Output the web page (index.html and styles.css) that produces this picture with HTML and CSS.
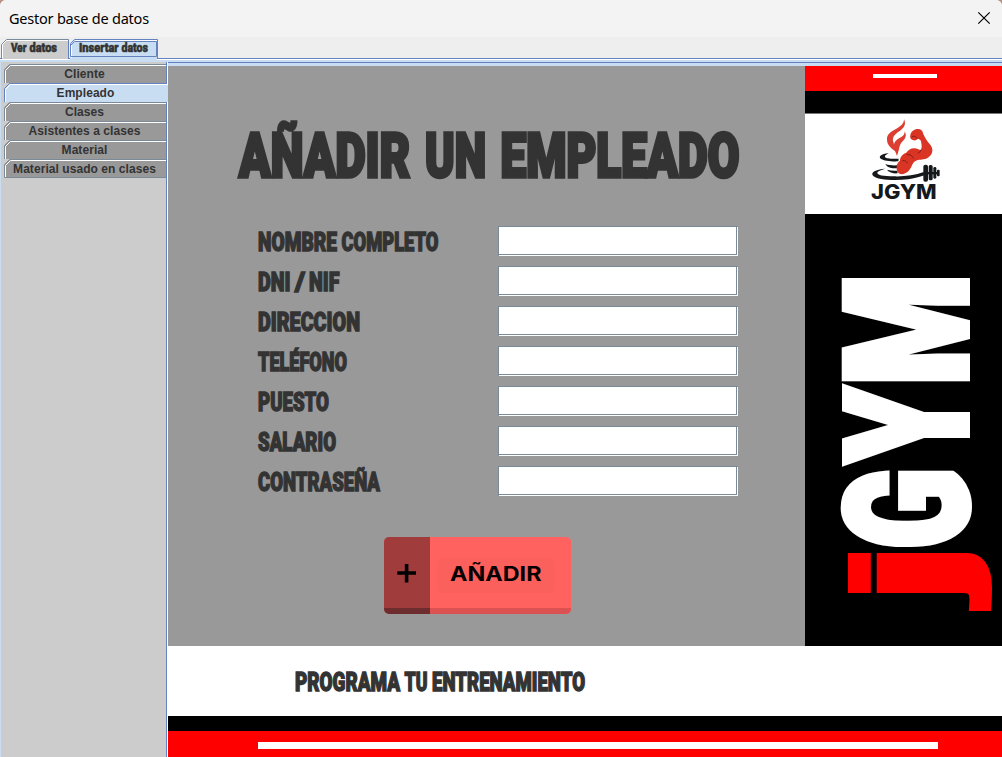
FILE: index.html
```
<!DOCTYPE html>
<html lang="es">
<head>
<meta charset="utf-8">
<title>Gestor base de datos</title>
<link rel="stylesheet" href="styles.css">
</head>
<body>
<div class="window">
  <header class="titlebar">
    <span class="caption">Gestor base de datos</span>
    <svg class="close" width="14" height="14" viewBox="0 0 14 14"><path d="M1.3 1.3 12.7 12.7M12.7 1.3 1.3 12.7"/></svg>
  </header>
  <nav class="tabs">
    <svg width="160" height="21" viewBox="0 0 160 21">
      <path class="tab-fill" d="M2 20V5L6 1H68V20Z"/>
      <path class="line-light" d="M2.5 19V5.500L6.500 1.500H68"/>
      <path class="line-grey" d="M1.500 19V5.500L6.500.5H68.500"/>
      <path class="line-blue" d="M68.500.5V19"/>
      <path class="tab-selected" d="M70 21V5L74 1H157V21Z"/>
      <path class="line-light" d="M71.500 19V5.500L75.500 1.500H157"/>
      <path class="line-blue" d="M70.500 17.500V4.500L74.500.5H157.500V20M74.500 2.500H156.500V17.500H70.500M70.500 6.500 74.500 2.500"/>
      <g class="impact small"><text x="11" y="13.300" textLength="15.500" lengthAdjust="spacingAndGlyphs">Ver</text><text x="29.500" y="13.300" textLength="27.500" lengthAdjust="spacingAndGlyphs">datos</text><text x="79" y="13.300" textLength="39.500" lengthAdjust="spacingAndGlyphs">Insertar</text><text x="121.500" y="13.300" textLength="26.500" lengthAdjust="spacingAndGlyphs">datos</text></g>
    </svg>
  </nav>
  <div class="body">
    <aside class="sidebar">
      <div class="side-tab"><svg width="164" height="19"><path class="side-fill" d="M1 20V5L5 1H164V20Z"/><path class="line-light" d="M1.500 20V6.500L6.500 1.500H164"/><path class="line-grey" d="M.5 20V5.500L5.500.5H164"/></svg><span>Cliente</span></div>
      <div class="side-tab active"><svg width="164" height="19"><path class="side-fill" d="M1 20V5L5 1H164V20Z"/><path class="line-light" d="M1.500 20V6.500L6.500 1.500H164"/><path class="line-blue" d="M.5 20V5.500L5.500.5H163"/></svg><span>Empleado</span></div>
      <div class="side-tab"><svg width="164" height="19"><path class="side-fill" d="M1 20V5L5 1H164V20Z"/><path class="line-light" d="M1.500 20V6.500L6.500 1.500H164"/><path class="line-grey" d="M.5 20V5.500L5.500.5H164"/></svg><span>Clases</span></div>
      <div class="side-tab"><svg width="164" height="19"><path class="side-fill" d="M1 20V5L5 1H164V20Z"/><path class="line-light" d="M1.500 20V6.500L6.500 1.500H164"/><path class="line-grey" d="M.5 20V5.500L5.500.5H164"/></svg><span>Asistentes a clases</span></div>
      <div class="side-tab"><svg width="164" height="19"><path class="side-fill" d="M1 20V5L5 1H164V20Z"/><path class="line-light" d="M1.500 20V6.500L6.500 1.500H164"/><path class="line-grey" d="M.5 20V5.500L5.500.5H164"/></svg><span>Material</span></div>
      <div class="side-tab last"><svg width="164" height="19"><path class="side-fill" d="M1 19V5L5 1H164V19Z"/><path class="line-light" d="M1.500 18V6.500L6.500 1.500H164"/><path class="line-grey" d="M164 18.500H.5V5.500L5.500.5H164"/></svg><span>Material usado en clases</span></div>
    </aside>
    <main class="content">
      <div class="upper">
        <section class="form">
          <svg class="title impact" width="510" height="70" viewBox="236 116 510 70">
            <text x="239" y="176.500" textLength="171" lengthAdjust="spacingAndGlyphs">AÑADIR</text>
            <text x="425" y="176.500" textLength="61" lengthAdjust="spacingAndGlyphs">UN</text>
            <text x="500.500" y="176.500" textLength="239" lengthAdjust="spacingAndGlyphs">EMPLEADO</text>
          </svg>
          <div class="fields">
            <label class="row"><svg class="impact label" width="240" height="30"><text x="0" y="25" textLength="79" lengthAdjust="spacingAndGlyphs">NOMBRE</text><text x="83.500" y="25" textLength="97" lengthAdjust="spacingAndGlyphs">COMPLETO</text></svg><input type="text"></label>
            <label class="row"><svg class="impact label" width="240" height="30"><text x="0" y="25" textLength="32.500" lengthAdjust="spacingAndGlyphs">DNI</text><text x="37" y="25" textLength="10" lengthAdjust="spacingAndGlyphs">/</text><text x="51" y="25" textLength="30.500" lengthAdjust="spacingAndGlyphs">NIF</text></svg><input type="text"></label>
            <label class="row"><svg class="impact label" width="240" height="30"><text x="0" y="25" textLength="102" lengthAdjust="spacingAndGlyphs">DIRECCION</text></svg><input type="text"></label>
            <label class="row"><svg class="impact label" width="240" height="30"><text x="0" y="25" textLength="89" lengthAdjust="spacingAndGlyphs">TELÉFONO</text></svg><input type="text"></label>
            <label class="row"><svg class="impact label" width="240" height="30"><text x="0" y="25" textLength="71" lengthAdjust="spacingAndGlyphs">PUESTO</text></svg><input type="text"></label>
            <label class="row"><svg class="impact label" width="240" height="30"><text x="0" y="25" textLength="78" lengthAdjust="spacingAndGlyphs">SALARIO</text></svg><input type="text"></label>
            <label class="row"><svg class="impact label" width="240" height="30"><text x="0" y="25" textLength="122" lengthAdjust="spacingAndGlyphs">CONTRASEÑA</text></svg><input type="password"></label>
          </div>
          <button class="add" type="button">
            <span class="plus"><svg width="46" height="77"><path d="M13.300 36H32M22.600 27V45.500"/></svg></span>
            <span class="add-face"><svg width="141" height="77"><rect class="inner" x="7" y="21" width="118" height="35" rx="6"/><text x="20" y="43.500" textLength="91.500" lengthAdjust="spacingAndGlyphs">AÑADIR</text></svg></span>
          </button>
        </section>
        <aside class="brand">
          <div class="brand-red"><i></i></div>
          <div class="brand-black"></div>
          <div class="brand-logo">
            <svg width="90" height="100" viewBox="0 27 270 300">
              <g class="ink">
                <path d="M86 145C62 147 55 155 62 161C72 167 93 170 115 169L116 161C95 162 78 161 75 156C73 152 79 149 86 145Z"/>
                <path d="M76 177C82 190 99 191 115 189L114 181C99 182 87 181 76 177Z"/>
                <path d="M81 194C88 203 100 206 113 205L112 197C100 198 91 197 81 194Z"/>
                <path d="M76 191C46 193 31 202 39 212C52 226 105 227 145 223C169 219 181 215 193 211L191 201C165 211 132 215 102 214C70 214 52 210 52 204C52 198 63 195 76 191Z"/>
                <rect x="190" y="179" width="14" height="51" rx="6"/><rect x="206" y="180" width="12" height="46" rx="5"/><rect x="220" y="186" width="9" height="35" rx="4"/><rect x="231" y="194" width="8" height="20" rx="3"/><rect x="193" y="201" width="43" height="7"/>
              </g>
              <path class="flame" d="M132 42C140 60 131 70 116 80C103 89 96 97 100 111C103 122 107 128 108 140C94 130 81 120 81 104C80 85 95 79 109 71C122 63 132 57 132 42Z"/>
              <path class="flame" d="M134 79C142 94 135 102 126 111C118 119 119 130 111 153C108 142 101 132 102 119C104 105 116 101 124 96C132 91 134 87 134 79Z"/>
              <g transform="translate(24 33)">
                <path class="arm" d="M127 58C128 47 139 39 150 39C159 39 164 44 165 52C170 64 177 76 188 88C195 98 195 109 188 118C180 128 170 131 158 131C146 131 137 136 132 148C127 162 116 174 101 175C90 174 85 165 86 151C87 143 91 138 96 134C96 123 105 113 114 111C121 102 128 97 138 97C146 96 151 101 157 102C162 99 162 90 159 76C157 70 153 69 148 69C144 75 135 74 130 70C126 67 126 62 127 58Z"/>
                <path class="cut" d="M116 116C126 114 133 119 136 127M158 102C158 107 154 110 149 111M103 134C110 132 116 136 119 142M131 63C137 59 142 60 147 66"/>
              </g>
              <text x="33" y="283" textLength="197" lengthAdjust="spacingAndGlyphs">JGYM</text>
            </svg>
          </div>
          <div class="brand-name">
            <svg class="impact poster" width="197" height="432" viewBox="805 214 197 432">
              <g transform="translate(966 600) rotate(-90)">
                <text class="red" x="-2" y="-8" textLength="58" lengthAdjust="spacingAndGlyphs">j</text>
                <text x="51" y="0" textLength="81" lengthAdjust="spacingAndGlyphs">G</text>
                <text x="138" y="0" textLength="74" lengthAdjust="spacingAndGlyphs">Y</text>
                <text x="215" y="0" textLength="111" lengthAdjust="spacingAndGlyphs">M</text>
              </g>
            </svg>
          </div>
        </aside>
      </div>
      <footer class="footer">
        <div class="slogan"><svg class="impact label" width="300" height="30"><text x="0" y="25" textLength="105" lengthAdjust="spacingAndGlyphs">PROGRAMA</text><text x="109.500" y="25" textLength="23" lengthAdjust="spacingAndGlyphs">TU</text><text x="137" y="25" textLength="153" lengthAdjust="spacingAndGlyphs">ENTRENAMIENTO</text></svg></div>
        <div class="stripe-black"></div>
        <div class="stripe-red"><i></i></div>
      </footer>
    </main>
  </div>
</div>
</body>
</html>
```
FILE: styles.css
```
* { box-sizing: border-box; }
body { margin: 0; width: 1002px; height: 757px; overflow: hidden; background: #b59186; }
svg { display: block; }
path { fill: none; }
.window { display: flex; flex-direction: column; width: 1002px; height: 757px; background: #eee; border-radius: 6px 6px 0 0; overflow: hidden; }
.titlebar { display: flex; justify-content: space-between; height: 37px; padding: 0 11px 0 9px; background: #f3f3f3; }
.caption { font: 14.500px/37px "Noto Sans", sans-serif; letter-spacing: -.22px; color: #000; }
.close { margin-top: 11px; }
.close path { stroke: #000; stroke-width: 1.200; }
.tabs { height: 25px; padding-top: 2px; background: linear-gradient(#eee 21px, #6382bf 21px, #6382bf 22px, #fff 22px, #fff 23px, #c8ddf2 23px); }
.tabs svg { overflow: visible; }
.tab-fill { fill: #ccc; }
.tab-selected { fill: #c8ddf2; }
.line-grey { stroke: #7a8a99; }
.line-blue { stroke: #6382bf; }
.line-light { stroke: #fff; }
.impact { font-family: Roboto, sans-serif; font-weight: 900; fill: #333; stroke: #333; overflow: visible; }
.small { font-size: 12px; stroke-width: .5px; }
.title { font-size: 62px; stroke-width: 3.600px; margin: 50px 0 0 68px; }
.label { font-size: 25.200px; stroke-width: 1.400px; }
.poster { font-size: 169px; fill: #fff; stroke: #fff; stroke-width: 8px; }
.poster .red { font-family: "Liberation Sans", Arial, sans-serif; font-weight: 700; font-size: 146px; fill: #f00; stroke: #f00; stroke-width: 8px; }
.body { display: flex; flex: 1; }
.sidebar { width: 168px; padding: 2px 0 0 3px; border-left: 1px solid #c8ddf2; background: linear-gradient(90deg, #ccc 165px, #6382bf 165px, #6382bf 166px, #fff 166px); }
.side-tab { display: grid; width: 162px; height: 19px; font: bold 12px/19px "Liberation Sans", Arial, sans-serif; color: #333; text-align: center; }
.side-tab svg, .side-tab span { grid-area: 1 / 1; }
.side-tab svg { width: 162px; }
.side-tab span { position: relative; z-index: 1; padding: 1px 1px 0 0; letter-spacing: .06px; white-space: nowrap; }
.side-fill { fill: #999; }
.active svg { width: 164px; }
.active .side-fill { fill: #c8ddf2; }
.content { width: 834px; border-top: 1px solid #6382bf; display: flex; flex-direction: column; }
.upper { display: flex; height: 583px; border-top: 3px solid #c8ddf2; }
.form { width: 637px; background: #999; }
.fields { display: flex; flex-direction: column; gap: 10px; margin: 40px 0 0 90px; }
.row { display: flex; height: 30px; }
.row input { width: 240px; height: 30px; padding: 0 3px; background: #fff; border: 1px solid #7a8a99; border-right: 0; border-bottom: 0; border-radius: 0; outline: 0; box-shadow: inset -1px -1px #fff, inset -2px -2px #7a8a99; }
.add { display: flex; width: 187px; height: 77px; margin: 41px 0 0 216px; padding: 0; border: 0; border-radius: 5px; overflow: hidden; background: #ff625f; }
.plus { width: 46px; background: linear-gradient(#a03c3c 71px, #6d2c2d 71px); }
.plus path { stroke: #000; stroke-width: 3.600; }
.add-face { width: 141px; background: linear-gradient(#ff625f 71px, #dc5152 71px); }
.add-face text { font: 700 19.500px Inter, sans-serif; fill: #080000; }
.inner { fill: #fc605d; }
.brand { width: 197px; background: #000; }
.brand-red { height: 25px; padding: 8px 0 0 68px; background: #f00; }
.brand-red i { display: block; width: 64px; height: 4px; background: #fff; }
.brand-black { height: 22px; }
.brand-logo { height: 101px; padding-left: 55px; border-top: 1px solid #777; background: #fff; }
.ink path, .ink rect { fill: #15191c; }
.flame { fill: #dc3e31; }
.arm { fill: #d93424; }
.cut { stroke: #751c18; stroke-width: 2.500; }
.brand-logo text { font: 800 61px Inter, sans-serif; fill: #15191c; }
.slogan { height: 70px; padding: 20px 0 0 127px; background: #fff; }
.stripe-black { height: 15px; background: #000; }
.stripe-red { height: 26px; padding: 11px 0 0 90px; background: #f00; }
.stripe-red i { display: block; width: 680px; height: 7px; background: #fff; }
```
